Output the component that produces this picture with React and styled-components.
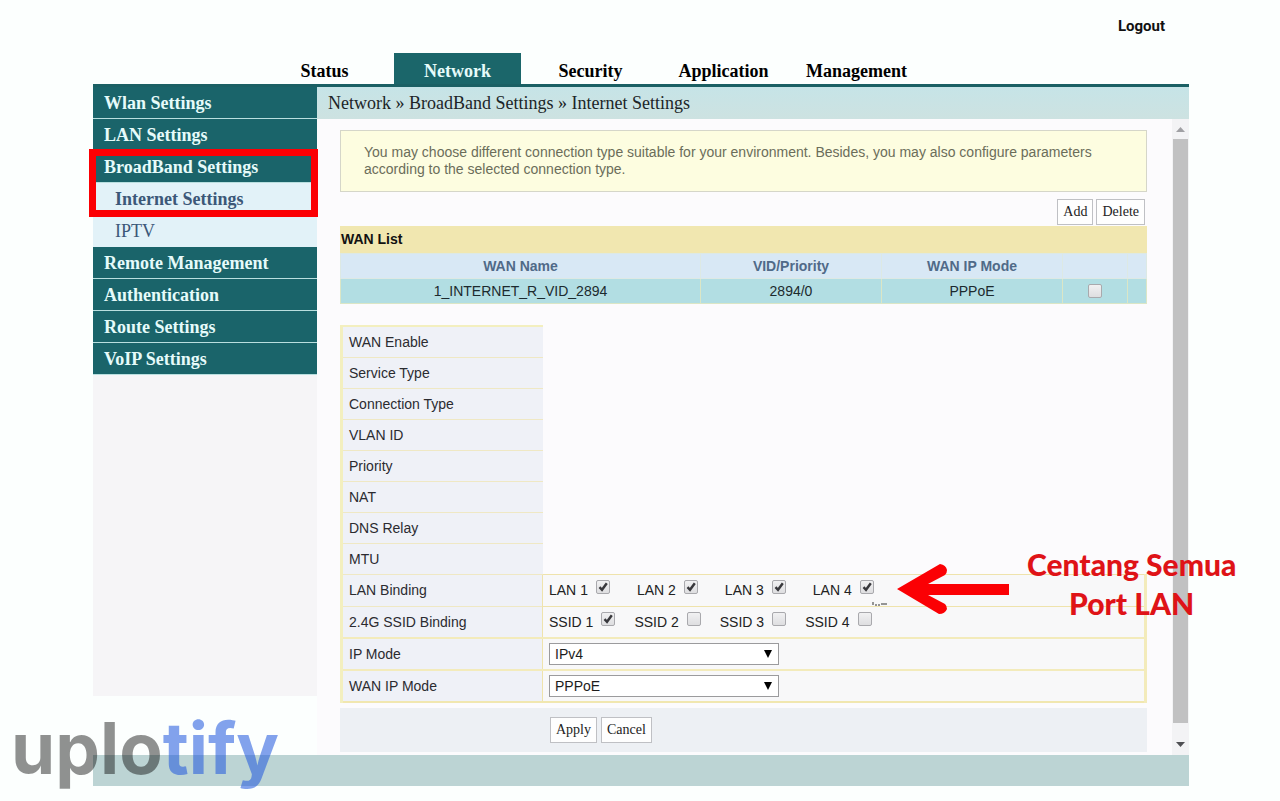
import React, { useState } from 'react';
import styled, { createGlobalStyle } from 'styled-components';

const GlobalStyle = createGlobalStyle`
  * {
    box-sizing: border-box;
  }

  body {
    margin: 0;
    background: #fcfffe;
    font-family: "Liberation Sans", Arial, sans-serif;
    font-size: 14px;
    color: #222;
  }
`;

const Page = styled.div`
  position: relative;
  padding: 0 91px 15px 93px;
`;

const Header = styled.header`
  display: flex;
  flex-direction: column;
`;

const Logout = styled.a`
  align-self: flex-end;
  margin: 16px 24px 17px 0;
  font-family: Roboto, sans-serif;
  font-size: 15px;
  font-weight: 700;
  line-height: 20px;
  color: #111;
  text-decoration: none;
`;

const Tabs = styled.nav`
  display: flex;
  gap: 6px;
  padding-left: 168px;
`;

const Tab = styled.a`
  width: 127px;
  padding-top: 5px;
  font-family: "Liberation Serif", serif;
  font-size: 18px;
  font-weight: 700;
  line-height: 26px;
  text-align: center;
  text-decoration: none;
  color: ${props => props.$active ? '#e6fbfa' : '#000'};
  background: ${props => props.$active ? '#1b666a' : 'transparent'};
`;

const Body = styled.div`
  display: flex;
  border-top: 3px solid #1b6064;
`;

const Sidebar = styled.aside`
  display: flex;
  flex-direction: column;
  flex: 0 0 224px;
  font-family: "Liberation Serif", serif;
  font-size: 18px;
`;

const MenuItem = styled.a`
  display: block;
  padding: 1px 0 0 11px;
  line-height: 30px;
  font-weight: 700;
  color: #e6fbfa;
  text-decoration: none;
  background: #1a646a;
  border-bottom: 1px solid #b9dfdf;
`;

const SubItem = styled.a`
  display: block;
  padding-left: 22px;
  line-height: 32px;
  font-weight: ${props => props.$active ? 700 : 400};
  color: #3c5878;
  text-decoration: none;
  background: #e2f2f8;
`;

const Highlight = styled.div`
  position: relative;

  &::after {
    content: '';
    position: absolute;
    inset: -2px -1px -2px -4px;
    border: 7px solid #fb0004;
    pointer-events: none;
  }
`;

const SidebarFill = styled.div`
  flex: 1;
  margin-bottom: 59px;
  background: #f6f5f7;
`;

const Main = styled.main`
  flex: 1;
  min-width: 0;
  background: #fcfbfd;
`;

const Breadcrumb = styled.div`
  padding-left: 11px;
  font-family: "Liberation Serif", serif;
  font-size: 18px;
  line-height: 32px;
  color: #1c2528;
  background: linear-gradient(#c6e4e7, #cde2e1);
`;

const Frame = styled.div`
  display: flex;
`;

const Content = styled.div`
  flex: 1;
  min-width: 0;
  padding: 11px 25px 3px 23px;
`;

const Notice = styled.p`
  margin: 0;
  padding: 13px 48px 13px 23px;
  line-height: 17px;
  color: #6b6d5a;
  background: #fdfde0;
  border: 1px solid #d5d6c9;
`;

const Toolbar = styled.div`
  display: flex;
  justify-content: flex-end;
  gap: 3px;
  padding: 7px 2px 1px;
`;

const Button = styled.button`
  height: 26px;
  padding: 0 5px;
  font-family: "Liberation Serif", serif;
  font-size: 14px;
  color: #222;
  background: #fefefe;
  border: 1px solid #bfc0c4;
`;

const WanTable = styled.table`
  width: 100%;
  border-collapse: collapse;
  table-layout: fixed;
  text-align: center;

  caption {
    padding-left: 1px;
    line-height: 27px;
    font-weight: 700;
    text-align: left;
    color: #111;
    background: #f1e7b0;
  }

  th,
  td {
    height: 25px;
    padding: 0;
    border: 1px solid #dbe6c6;
  }

  th {
    color: #506a88;
    background: #d8e8f5;
    border-color: #dde9e4;
  }

  td {
    color: #1c2a2e;
    background: #b2dee3;
  }
`;

const Settings = styled.table`
  width: 100%;
  margin-top: 21px;
  border-collapse: collapse;

  th {
    width: 201px;
    height: 31px;
    padding: 0 0 0 6px;
    font-weight: 400;
    text-align: left;
    color: #2b2b30;
    background: #eff1f7;
    border-top: 1px solid #efe8c4;
    border-left: 3px solid #f3efbf;
  }

  td {
    height: 32px;
    padding: 0 0 0 6px;
    background: #f8f8f9;
    border: 1px solid #efe3ac;
    border-right: 3px solid #f3ebbb;
  }

  tr:first-child th {
    border-top: 2px solid #f3efbf;
  }

  tr:nth-last-child(-n + 2) th,
  tr:nth-last-child(-n + 2) td {
    border-top: 2px solid #f3ebbb;
  }

  tr:last-child th,
  tr:last-child td {
    border-bottom: 2px solid #f1e7b0;
  }
`;

const Options = styled.div`
  position: relative;
  display: flex;
  gap: ${props => props.$gap}px;
`;

const Option = styled.label`
  display: flex;
  align-items: center;
  gap: 8px;
`;

const CheckBox = styled.span`
  position: relative;
  display: inline-flex;
  width: 14px;
  height: 14px;
  vertical-align: middle;
  margin-bottom: ${props => props.$raised ? 6 : 2}px;

  input {
    appearance: none;
    width: 14px;
    height: 14px;
    margin: 0;
    border: 1px solid #a9a9ad;
    border-radius: 2px;
    background: linear-gradient(#f1f1f2, #dedee0);
  }

  svg {
    position: absolute;
    inset: 0;
    pointer-events: none;
  }
`;

const SelectBox = styled.span`
  position: relative;
  display: block;
  width: 230px;

  select {
    appearance: none;
    display: block;
    width: 100%;
    height: 22px;
    padding: 0 5px;
    font-family: inherit;
    font-size: 14px;
    color: #1c1c1c;
    background: #fff;
    border: 1px solid #9b9b9d;
    border-radius: 0;
  }

  svg {
    position: absolute;
    top: 7px;
    right: 7px;
    pointer-events: none;
  }
`;

const Actions = styled.div`
  display: flex;
  gap: 4px;
  margin-top: 5px;
  padding: 9px 0 9px 210px;
  background: #edf0f4;
`;

const ScrollTrack = styled.div`
  display: flex;
  flex-direction: column;
  align-items: center;
  width: 17px;
  background: #f3f3f5;
`;

const ScrollThumb = styled.div`
  flex: 1;
  width: 15px;
  background: #c1c1c2;
`;

const ScrollArrow = styled.svg`
  width: 9px;
  height: 5px;
  margin: ${props => props.$down ? '19px 0 8px' : '8px 0 7px'};
`;

// note that floats over the LAN row
const Callout = styled.div`
  position: absolute;
  top: -35px;
  left: 348px;
  display: flex;
  align-items: center;
  gap: 18px;
  font-family: Lato, sans-serif;
  font-size: 30px;
  font-weight: 900;
  line-height: 39px;
  text-align: center;
  white-space: nowrap;
  color: #df1317;
  pointer-events: none;

  svg {
    margin-top: 10px;
  }
`;

const Speck = styled.svg`
  position: absolute;
  top: 22px;
  left: 323px;
`;

const Footer = styled.footer`
  height: 31px;
  background: #bcd4d4;
`;

const Brand = styled.div`
  position: absolute;
  left: 11px;
  bottom: 13px;
  font-family: Inter, sans-serif;
  font-size: 71px;
  font-weight: 700;
  line-height: 80px;
  color: rgba(0, 0, 0, 0.43);

  span {
    color: rgba(37, 91, 222, 0.57);
  }
`;

const tabs = ['Status', 'Network', 'Security', 'Application', 'Management'];
const emptyRows = ['WAN Enable', 'Service Type', 'Connection Type', 'VLAN ID', 'Priority', 'NAT', 'DNS Relay', 'MTU'];

function Check({ raised, defaultChecked = false, ...rest }) {
  const [checked, setChecked] = useState(defaultChecked);

  return (
    <CheckBox $raised={raised}>
      <input type="checkbox" checked={checked} onChange={(e) => setChecked(e.target.checked)} {...rest} />
      {checked && (
        <svg width="14" height="14" viewBox="0 0 14 14">
          <path d="M3.5 7.2 L6 9.8 L10.8 3.2" fill="none" stroke="#38383c" strokeWidth="2.4" />
        </svg>
      )}
    </CheckBox>
  );
}

function Select({ id, options }) {
  return (
    <SelectBox>
      <select id={id}>
        {options.map(option => <option key={option}>{option}</option>)}
      </select>
      <svg width="8" height="8" viewBox="0 0 8 8">
        <path d="M0 0 H8 L4 8 Z" fill="#000" />
      </svg>
    </SelectBox>
  );
}

function App() {
  return (
    <Page>
      <GlobalStyle />
      <Header>
        <Logout href="#logout">Logout</Logout>
        <Tabs>
          {tabs.map(tab => (
            <Tab key={tab} href={`#${tab}`} $active={tab === 'Network'}>{tab}</Tab>
          ))}
        </Tabs>
      </Header>
      <Body>
        <Sidebar>
          <MenuItem href="#wlan">Wlan Settings</MenuItem>
          <MenuItem href="#lan">LAN Settings</MenuItem>
          <Highlight>
            <MenuItem href="#broadband">BroadBand Settings</MenuItem>
            <SubItem href="#internet" $active>Internet Settings</SubItem>
          </Highlight>
          <SubItem href="#iptv">IPTV</SubItem>
          <MenuItem href="#remote">Remote Management</MenuItem>
          <MenuItem href="#auth">Authentication</MenuItem>
          <MenuItem href="#route">Route Settings</MenuItem>
          <MenuItem href="#voip">VoIP Settings</MenuItem>
          <SidebarFill />
        </Sidebar>
        <Main>
          <Breadcrumb>Network » BroadBand Settings » Internet Settings</Breadcrumb>
          <Frame>
            <Content>
              <Notice>
                You may choose different connection type suitable for your environment. Besides, you may also configure parameters according to the selected connection type.
              </Notice>
              <Toolbar>
                <Button type="button">Add</Button>
                <Button type="button">Delete</Button>
              </Toolbar>
              <WanTable>
                <caption>WAN List</caption>
                <colgroup>
                  <col />
                  <col width="181" />
                  <col width="181" />
                  <col width="65" />
                  <col width="19" />
                </colgroup>
                <thead>
                  <tr>
                    <th>WAN Name</th>
                    <th>VID/Priority</th>
                    <th>WAN IP Mode</th>
                    <th />
                    <th />
                  </tr>
                </thead>
                <tbody>
                  <tr>
                    <td>1_INTERNET_R_VID_2894</td>
                    <td>2894/0</td>
                    <td>PPPoE</td>
                    <td><Check aria-label="1_INTERNET_R_VID_2894" /></td>
                    <td />
                  </tr>
                </tbody>
              </WanTable>
              <Settings>
                <tbody>
                  {emptyRows.map(name => (
                    <tr key={name}>
                      <th>{name}</th>
                    </tr>
                  ))}
                  <tr>
                    <th>LAN Binding</th>
                    <td>
                      <Options $gap={27}>
                        {[1, 2, 3, 4].map(n => (
                          <Option key={n}>LAN {n} <Check raised defaultChecked /></Option>
                        ))}
                        <Speck width="15" height="4" viewBox="0 0 15 4">
                          <path d="M1 0V3M4 2V4M6 3H8M9 2H15" fill="none" stroke="#333" />
                        </Speck>
                        <Callout>
                          <svg width="112" height="50" viewBox="0 0 112 50">
                            <path d="M0 25 L43 0 Q49 1 50 6 Q50 9 48 11 L31 20 H112 V31 H31 L48 40 Q50 42 50 45 Q48 50 42 50 Z" fill="#fb0004" />
                          </svg>
                          <div>Centang Semua<br />Port LAN</div>
                        </Callout>
                      </Options>
                    </td>
                  </tr>
                  <tr>
                    <th>2.4G SSID Binding</th>
                    <td>
                      <Options $gap={19}>
                        {[1, 2, 3, 4].map(n => (
                          <Option key={n}>SSID {n} <Check raised defaultChecked={n === 1} /></Option>
                        ))}
                      </Options>
                    </td>
                  </tr>
                  <tr>
                    <th><label htmlFor="ip-mode">IP Mode</label></th>
                    <td><Select id="ip-mode" options={['IPv4', 'IPv6', 'IPv4/IPv6']} /></td>
                  </tr>
                  <tr>
                    <th><label htmlFor="wan-ip-mode">WAN IP Mode</label></th>
                    <td><Select id="wan-ip-mode" options={['PPPoE', 'DHCP', 'Static']} /></td>
                  </tr>
                </tbody>
              </Settings>
              <Actions>
                <Button type="button">Apply</Button>
                <Button type="button">Cancel</Button>
              </Actions>
            </Content>
            <ScrollTrack>
              <ScrollArrow viewBox="0 0 9 5">
                <path d="M0 5 L4.5 0 L9 5 Z" fill="#a0a0a4" />
              </ScrollArrow>
              <ScrollThumb />
              <ScrollArrow $down viewBox="0 0 9 5">
                <path d="M0 0 H9 L4.5 5 Z" fill="#505054" />
              </ScrollArrow>
            </ScrollTrack>
          </Frame>
        </Main>
      </Body>
      <Footer />
      <Brand>uplo<span>tify</span></Brand>
    </Page>
  );
}

export default App;
